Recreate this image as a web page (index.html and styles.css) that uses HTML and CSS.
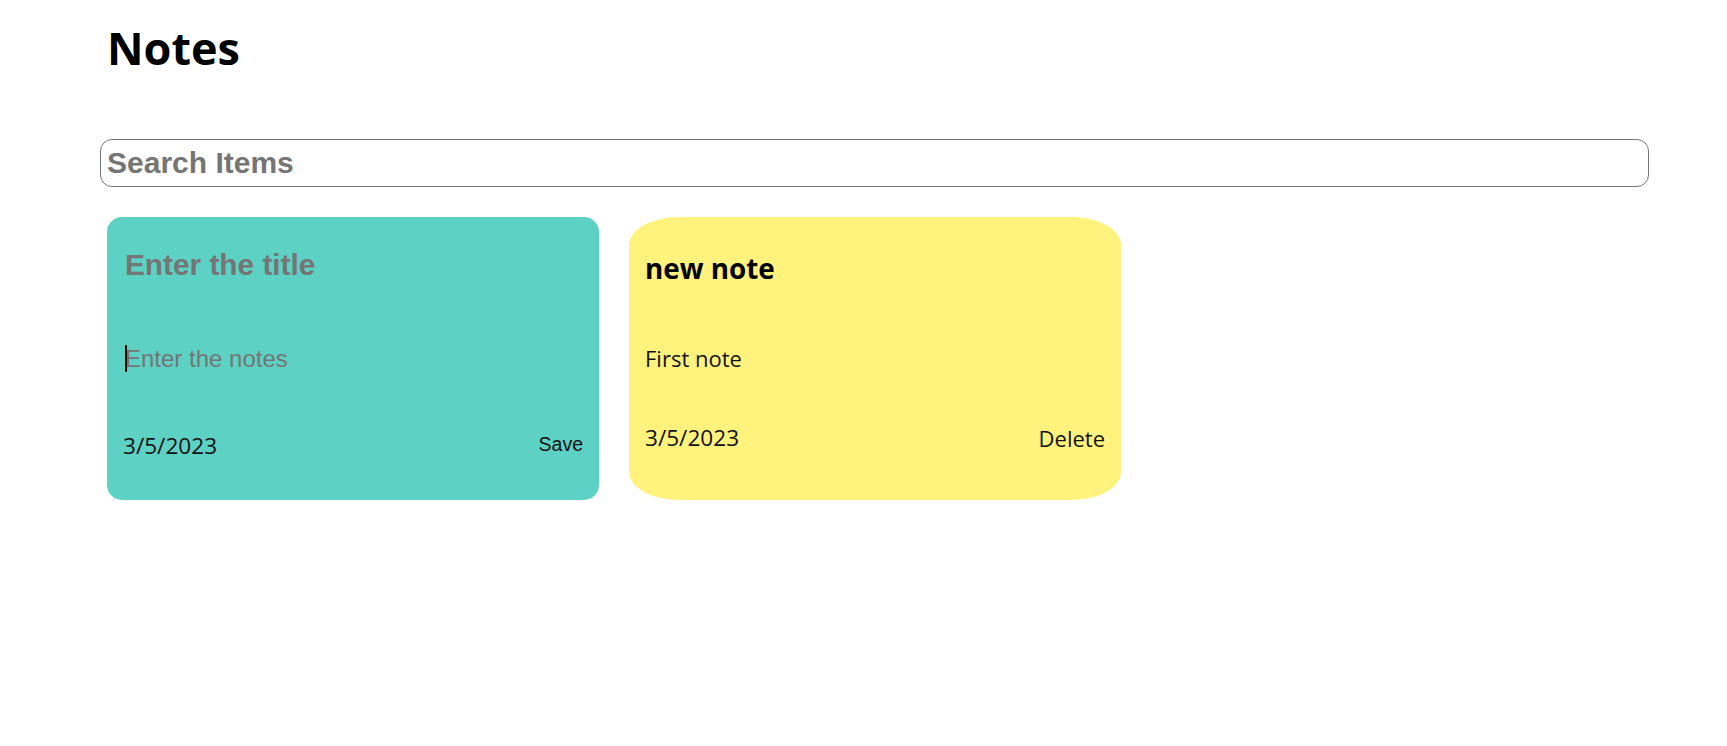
FILE: index.html
```html
<!DOCTYPE html>
<html lang="en">
<head>
<meta charset="utf-8">
<title>Notes</title>
<link rel="stylesheet" href="styles.css">
</head>
<body>
<div class="app">
  <h1 class="app-title">Notes</h1>
  <input class="search" type="text" placeholder="Search Items">
  <div class="notes-list">
    <div class="note note-new">
      <input class="new-title" type="text" placeholder="Enter the title">
      <div class="text-wrap">
        <textarea class="new-text" placeholder="Enter the notes"></textarea>
        <span class="caret"></span>
      </div>
      <div class="note-footer">
        <span class="note-date">3/5/2023</span>
        <button class="save-btn" type="button">Save</button>
      </div>
    </div>
    <div class="note note-saved">
      <h2 class="note-title">new note</h2>
      <p class="note-text">First note</p>
      <div class="note-footer">
        <span class="note-date">3/5/2023</span>
        <span class="delete-btn">Delete</span>
      </div>
    </div>
  </div>
</div>
</body>
</html>
```

FILE: styles.css
```css
* { box-sizing: border-box; }
html, body { margin: 0; padding: 0; background: #ffffff; }
body { font-family: "Open Sans", "Noto Sans", sans-serif; color: #111; }

.app {
  padding: 0 78px 0 100px;
}

.app-title {
  margin: 18px 0 0 7px;
  font-family: "Open Sans", sans-serif;
  font-weight: 700;
  font-size: 45px;
  line-height: 60px;
  color: #000;
}

.search {
  display: block;
  width: 100%;
  height: 48px;
  margin: 61px 0 0 0;
  padding: 0 6px;
  border: 1px solid #767676;
  border-radius: 12px;
  font-family: "Liberation Sans", Arial, sans-serif;
  font-weight: 700;
  font-size: 30px;
  color: #000;
  background: #fff;
  outline: none;
}
.search::placeholder { color: #757575; opacity: 1; }

.notes-list {
  display: flex;
  gap: 30px;
  margin: 30px 0 0 7px;
}

.note {
  width: 492px;
  height: 283px;
  padding: 16px;
  display: flex;
  flex-direction: column;
}

.note-new {
  background: #5dd1c4;
  border-radius: 15px;
}

.note-saved {
  background: #fff37e;
  border-radius: 10%;
}

.new-title {
  display: block;
  width: 100%;
  height: 40px;
  margin: 12px 0 0;
  padding: 0 2px;
  border: none;
  background: transparent;
  outline: none;
  font-family: "Liberation Sans", Arial, sans-serif;
  font-weight: 700;
  font-size: 29.8px;
  color: #000;
}
.new-title::placeholder { color: #757575; opacity: 1; }

.text-wrap {
  position: relative;
  margin: 58px 0 0;
}

.new-text {
  display: block;
  width: 100%;
  height: 60px;
  padding: 2px 2px;
  border: none;
  background: transparent;
  outline: none;
  resize: none;
  font-family: "Liberation Sans", Arial, sans-serif;
  font-size: 24px;
  line-height: 28px;
  color: #000;
}
.new-text::placeholder { color: #757575; opacity: 1; }

.caret {
  position: absolute;
  left: 2px;
  top: 2px;
  width: 2px;
  height: 27px;
  background: #000;
}

.note-footer {
  display: flex;
  justify-content: space-between;
  align-items: center;
}

.note-new .note-footer { margin-top: 28px; }

.note-date {
  font-size: 22.6px;
  line-height: 30px;
  color: #111;
}

.save-btn {
  padding: 0 0 3px;
  border: none;
  background: transparent;
  font-family: "Liberation Sans", Arial, sans-serif;
  font-size: 19.5px;
  line-height: 23px;
  color: #111;
}

.note-title {
  margin: 17px 0 0;
  font-size: 27.8px;
  line-height: 36px;
  font-weight: 700;
  color: #000;
}

.note-text {
  margin: 57px 0 0;
  font-size: 22px;
  line-height: 30px;
  color: #111;
}

.note-saved .note-footer { margin-top: 50px; }

.delete-btn {
  font-size: 22px;
  line-height: 30px;
  color: #111;
}
```
